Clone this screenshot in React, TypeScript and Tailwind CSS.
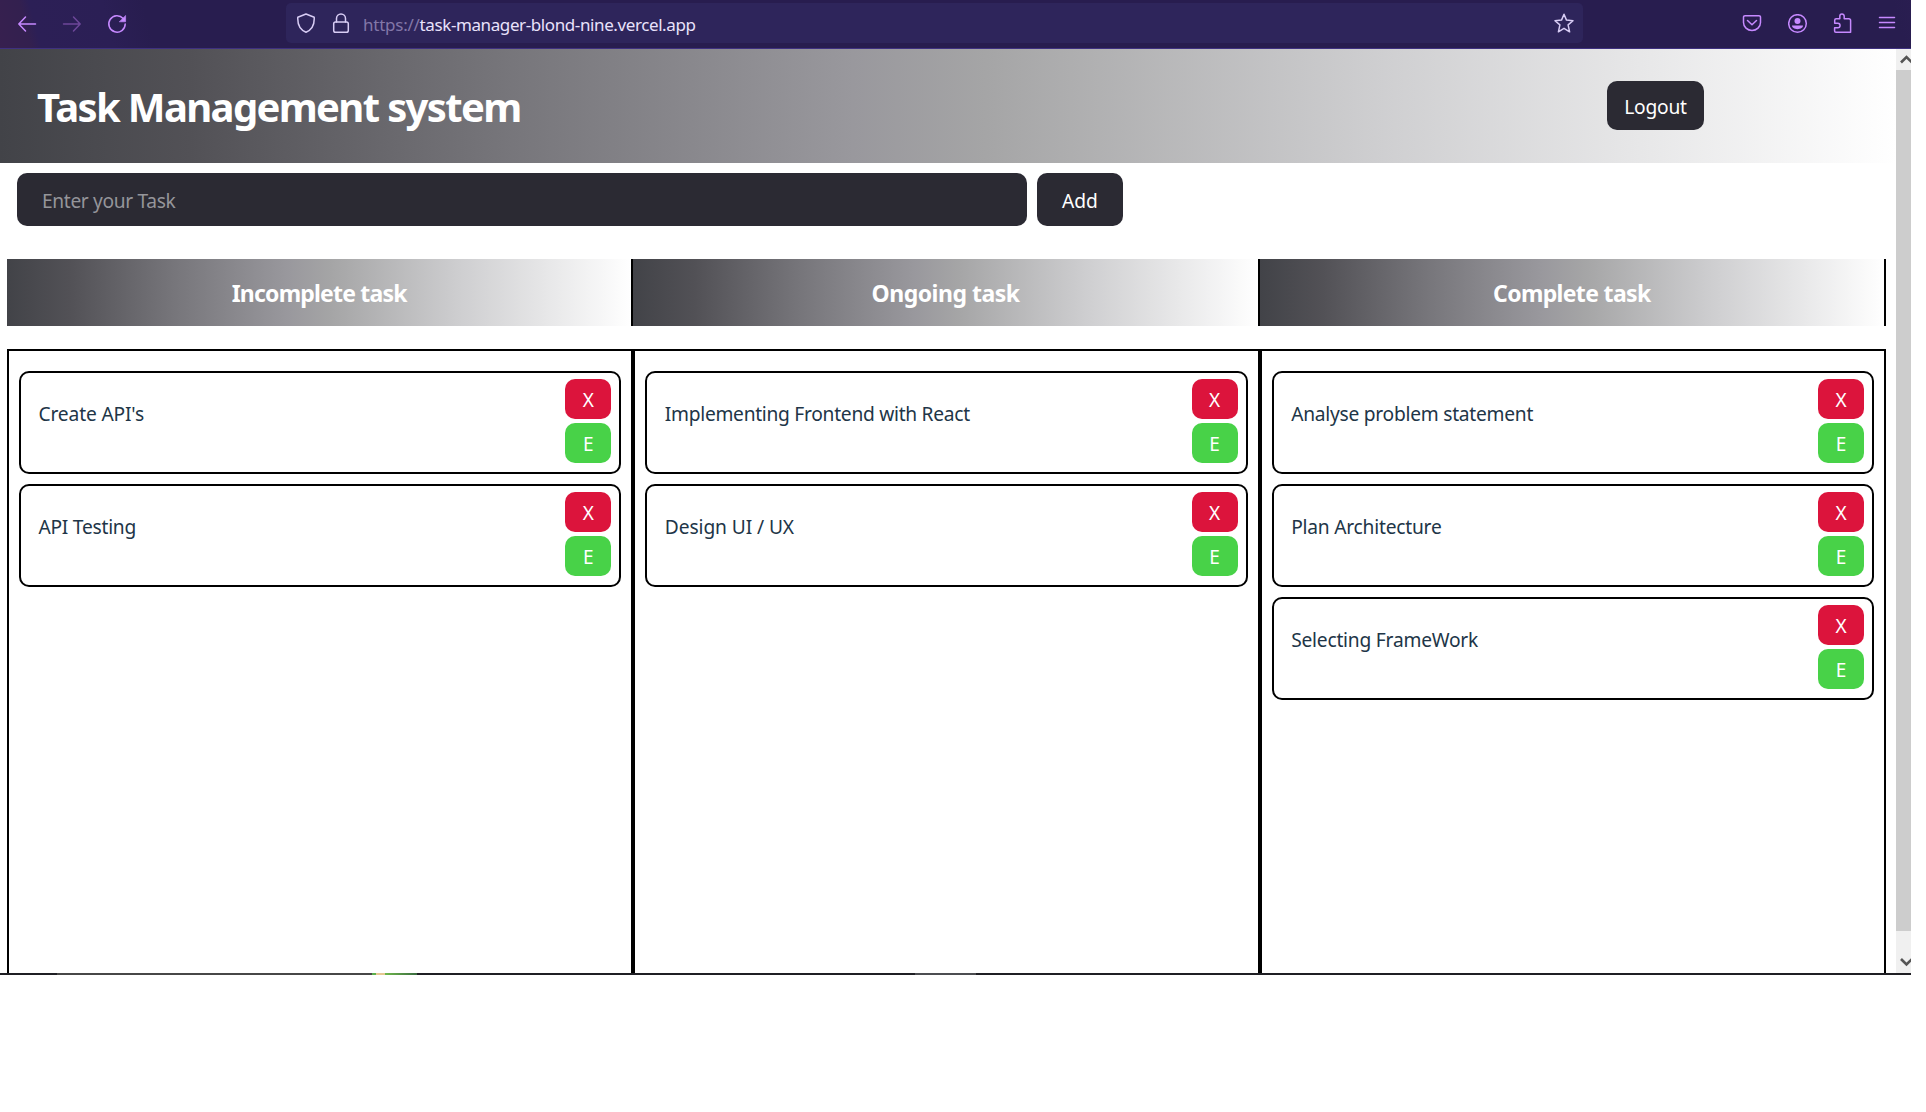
import React from "react";

type Task = { text: string; tracking: string };
type Column = { title: string; tracking: string; tasks: Task[] };

const columns: Column[] = [
  {
    title: "Incomplete task",
    tracking: "tracking-[-0.8px]",
    tasks: [
      { text: "Create API's", tracking: "tracking-[-0.15px]" },
      { text: "API Testing", tracking: "tracking-[-0.25px]" },
    ],
  },
  {
    title: "Ongoing task",
    tracking: "tracking-[-0.5px]",
    tasks: [
      { text: "Implementing Frontend with React", tracking: "tracking-[-0.28px]" },
      { text: "Design UI / UX", tracking: "tracking-[-0.1px]" },
    ],
  },
  {
    title: "Complete task",
    tracking: "tracking-[-0.65px]",
    tasks: [
      { text: "Analyse problem statement", tracking: "tracking-[-0.25px]" },
      { text: "Plan Architecture", tracking: "tracking-[-0.22px]" },
      { text: "Selecting FrameWork", tracking: "tracking-[-0.22px]" },
    ],
  },
];

const GRADIENT =
  "bg-[linear-gradient(to_right,#424348_0%,#525156_10%,#77767b_27%,#99989d_45%,#a5a5a6_52%,#cfcfd1_73%,#ffffff_100%)]";

function Icon({ className = "", children }: { className?: string; children: React.ReactNode }) {
  return (
    <svg
      viewBox="0 0 20 20"
      className={"h-5 w-5 shrink-0 " + className}
      fill="none"
      stroke="currentColor"
      strokeWidth="1.5"
      strokeLinecap="round"
      strokeLinejoin="round"
    >
      {children}
    </svg>
  );
}

function Toolbar() {
  return (
    <div className="flex h-[49px] items-start border-b border-[#3f3180] bg-[linear-gradient(75deg,#37204f_0px,#33204f_30px,#2c1f56_40px,#2b1f55_110px,#281d4f_150px,#281d4f_1840px,#2e1f55_1911px)] text-[#c689ff]">
      <Icon className="mt-[14px] ml-[17px]">
        <path d="M1.8 10H18.5M8.5 3 1.8 10l6.7 7" />
      </Icon>
      <Icon className="mt-[14px] ml-[25px] text-[#6d4799]">
        <path d="M1.5 10h16.7M11.5 3l6.7 7-6.7 7" />
      </Icon>
      <Icon className="mt-[14px] ml-[25px]">
        <path d="M16.2 4.6A8.2 8.2 0 1 0 18.2 10" />
        <path d="M18.6 1.8v6h-6z" fill="currentColor" strokeWidth="0.6" />
      </Icon>
      <div className="mt-[3px] ml-[159px] flex h-10 w-[1297px] rounded-[5px] bg-[#2e255b] text-[#d8cdf5]">
        <Icon className="mt-[10px] ml-[10px]">
          <path d="M10 1 18.2 4.2C18.6 11 16.5 16.5 10 19.2 3.5 16.5 1.4 11 1.8 4.2z" />
        </Icon>
        <Icon className="mt-[10px] ml-[15px]">
          <rect x="2.7" y="9" width="14.6" height="10.2" rx="1.8" />
          <path d="M5.5 9V5.4a4.5 4.5 0 0 1 9 0V9" />
        </Icon>
        <span className="mt-[10px] ml-[12px] text-[17px] leading-6 tracking-[-0.4px] whitespace-nowrap text-[#e9e2fb]">
          <span className="tracking-[-0.25px] text-[#8277a8]">https://</span>task-manager-blond-nine.vercel.app
        </span>
        <Icon className="mt-[10px] mr-[9px] ml-auto">
          <path d="M10 1.200l2.500 5.900 6.500.6-4.900 4.200 1.500 6.900L10 15.300l-5.600 3.500 1.500-6.900L1 7.700l6.500-.6z" />
        </Icon>
      </div>
      <Icon className="mt-[13px] ml-[159px]">
        <path d="M3 2.700h14a1.500 1.500 0 0 1 1.500 1.500v5.300a8.500 8 0 0 1-17 0V4.200A1.500 1.500 0 0 1 3 2.700zM5.500 7.500 10 11.700l4.500-4.200" />
      </Icon>
      <Icon className="mt-[14px] ml-[26px]">
        <circle cx="9.5" cy="9.5" r="8.8" />
        <circle cx="9.5" cy="7" r="3" fill="currentColor" stroke="none" />
        <path d="M4 11.600h11c0 2-2.200 3.600-5.500 3.600S4 13.600 4 11.600z" fill="currentColor" stroke="none" />
      </Icon>
      <Icon className="mt-[13px] ml-[25px]">
        <path d="M3.200 5.700h3.600V3.200a2.200 2.200 0 0 1 4.400 0v2.500h4.600a1.800 1.800 0 0 1 1.800 1.800v11.700H2.800a1.200 1.200 0 0 1-1.200-1.200v-3.200h3.200a2.200 2.200 0 0 0 0-4.500H1.700V7.200a1.500 1.500 0 0 1 1.500-1.500z" />
      </Icon>
      <Icon className="mt-[13px] ml-[24px]">
        <path d="M2.500 4.500h15M2.500 9.500h15M2.500 14.500h15" />
      </Icon>
    </div>
  );
}

function Card({ text, tracking }: Task) {
  return (
    <div className="flex h-[103px] justify-between rounded-[10px] border-2 border-black pt-[6px] pr-2 pl-[17.5px]">
      <span className={"pt-[21px] text-[19.2px] leading-[28px] whitespace-nowrap text-[#213547] " + tracking}>
        {text}
      </span>
      <div className="flex flex-col gap-1 text-[19px] text-white">
        <button className="h-10 w-[46px] rounded-[10px] bg-[#dc143c] pt-[3px]">X</button>
        <button className="h-10 w-[46px] rounded-[10px] bg-[#48d248] pt-[3px]">E</button>
      </div>
    </div>
  );
}

function Chevron({ d }: { d: string }) {
  return (
    <svg viewBox="0 0 15 21" className="block h-[21px] w-[15px]" fill="none" stroke="#555555" strokeWidth="2.6">
      <path d={d} />
    </svg>
  );
}

export default function App() {
  return (
    <div className="h-[1112px] w-full bg-white font-['Noto_Sans',sans-serif]">
      <div className="w-[1911px]">
        <Toolbar />
        <div className="flex h-[924px] overflow-hidden">
          <main className="w-[1896px]">
            <header className={"flex h-[114px] items-center justify-between pr-[192px] pl-[37px] " + GRADIENT}>
              <h1 className="pt-px text-[40px] font-bold tracking-[-1.65px] text-white">Task Management system</h1>
              <button className="mb-[2px] h-[49px] w-[97px] rounded-[10px] bg-[#2b2a33] pt-[4px] text-[19.2px] tracking-[-0.2px] text-white">
                Logout
              </button>
            </header>

            <div className="mt-[10px] flex gap-[10px] pl-[17px]">
              <input
                placeholder="Enter your Task"
                className="h-[53px] w-[1010px] rounded-[10px] bg-[#2b2a33] pt-[2px] pl-[25px] text-[19.2px] tracking-[-0.35px] placeholder:text-[#95959a]"
              />
              <button className="h-[53px] w-[86px] rounded-[10px] bg-[#2b2a33] pt-[3px] text-[19.2px] text-white">
                Add
              </button>
            </div>

            <div className="mt-[33px] flex w-[1886px] pl-[7px]">
              {columns.map((c) => (
                <h2
                  key={c.title}
                  className={
                    "h-[67px] flex-1 border-r-2 border-black pt-[2px] text-center text-[23px] leading-[64px] font-bold text-white " +
                    `${c.tracking} ${GRADIENT}`
                  }
                >
                  {c.title}
                </h2>
              ))}
            </div>

            <div className="mt-[23px] flex h-[700px] w-[1886px] pl-[7px]">
              {columns.map((c) => (
                <section
                  key={c.title}
                  className="flex flex-1 flex-col gap-[10px] border-2 border-black px-[10px] pt-[20px]"
                >
                  {c.tasks.map((t) => (
                    <Card key={t.text} {...t} />
                  ))}
                </section>
              ))}
            </div>
          </main>

          <aside className="flex w-[15px] flex-col bg-[#f0f0f0]">
            <Chevron d="M5 13.500 10.500 8l5.500 5.500" />
            <div className="mb-[21px] h-[861px] bg-[#cdcdcd]" />
            <Chevron d="M5 7l5.500 5.500L16 7" />
          </aside>
        </div>

        <div className="flex h-[2px] bg-[#1f1f24]">
          <div className="ml-[57px] w-[315px] bg-[#474747]" />
          <div className="w-[4px] bg-[#5cb04c]" />
          <div className="w-[9px] bg-[#e6c893]" />
          <div className="w-[32px] bg-[linear-gradient(to_right,#6fb84c,#3a6b3f)]" />
          <div className="ml-[498px] w-[61px] bg-[#4c4d51]" />
        </div>
      </div>
    </div>
  );
}
